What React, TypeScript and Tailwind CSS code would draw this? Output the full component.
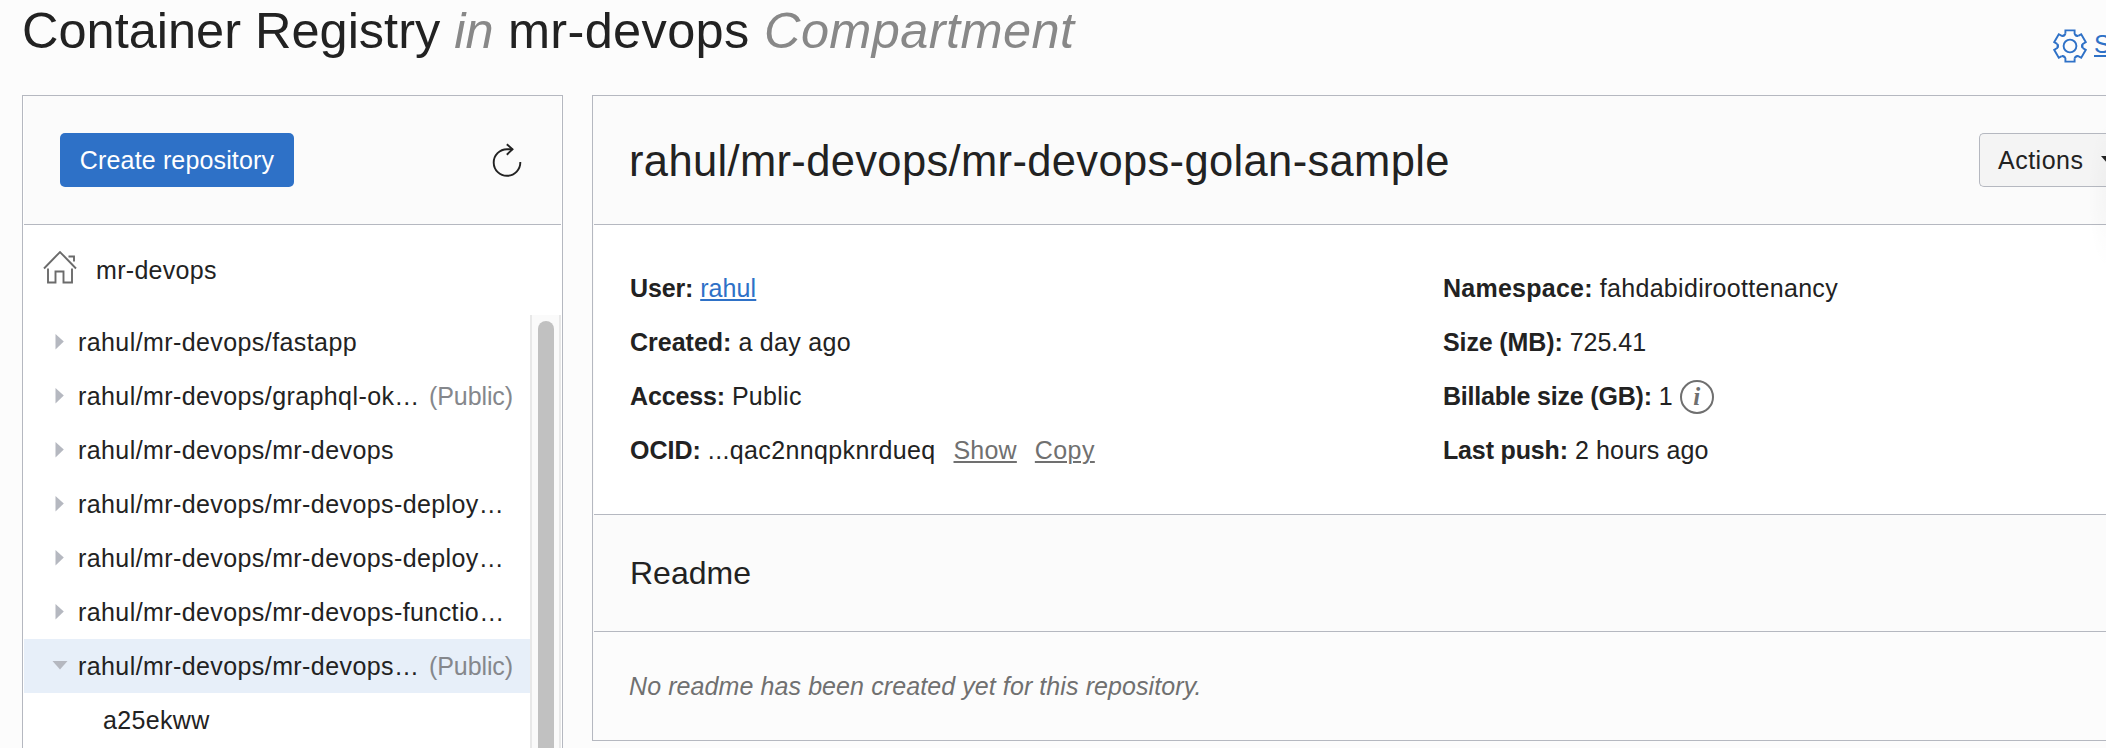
import React from "react";

type Repo = { name: string; isPublic?: boolean; open?: boolean };

const repos: Repo[] = [
  { name: "rahul/mr-devops/fastapp" },
  { name: "rahul/mr-devops/graphql-ok…", isPublic: true },
  { name: "rahul/mr-devops/mr-devops" },
  { name: "rahul/mr-devops/mr-devops-deploy…" },
  { name: "rahul/mr-devops/mr-devops-deploy…" },
  { name: "rahul/mr-devops/mr-devops-functio…" },
  { name: "rahul/mr-devops/mr-devops…", isPublic: true, open: true },
];

const TOOTH = "M-4.600 -12.200V-15.600H4.600V-12.200Q5.400 -9.900 7.800 -10.300";

function Gear() {
  return (
    <svg width="34" height="34" viewBox="-17 -17 34 34" fill="none" stroke="#2e71c7" strokeWidth="1.9">
      {[0, 60, 120, 180, 240, 300].map((a) => (
        <g key={a} transform={`rotate(${a})`}>
          <path d={TOOTH} />
          <path d="M-4.600 -12.200Q-5.400 -9.900 -7.800 -10.300" />
        </g>
      ))}
      <circle r="6.400" />
    </svg>
  );
}

function Home() {
  return (
    <svg width="34" height="34" viewBox="0 0 34 34" fill="none" stroke="#6b6b6b" strokeWidth="1.9">
      <path d="M1 18.500 17 2l16 16.500" />
      <path d="M25.500 6.500h5.500v5" />
      <path d="M5 18.500V32.500h7.500V21.500h8V32.500H29V18.500" />
    </svg>
  );
}

function Refresh() {
  return (
    <svg width="30" height="34" viewBox="0 0 30 34" fill="none" stroke="#222" strokeWidth="1.900">
      <path d="M28.300 19A13.300 13.300 0 1 1 15 6.200H20.500" />
      <path d="M14.800 1.200 20.500 6.200 14.800 11.700" />
    </svg>
  );
}

type FieldProps = { label: string; tight?: string; children: React.ReactNode };

function Field({ label, tight = "", children }: FieldProps) {
  return (
    <div className="flex h-[54px] items-center whitespace-pre tracking-[0.3px]">
      <b className={`mr-[7px] ${tight || "tracking-normal"}`}>{label}:</b>
      {children}
    </div>
  );
}

export default function App() {
  return (
    <div className="relative flex h-[748px] w-[2106px] flex-col overflow-hidden bg-[#fcfcfc] font-['Liberation_Sans',Arial,sans-serif] text-[25px] text-[#222]">
      <header className="flex h-[95px] shrink-0 justify-between whitespace-nowrap pl-[22px]">
        <h1 className="text-[50.500px] leading-[62px]">
          <span>Container Registry </span>
          <i className="text-[#888]">in</i>
          <span className="tracking-[0.35px]"> mr-devops </span>
          <i className="tracking-[0.4px] text-[#888]">Compartment</i>
        </h1>
        <div className="mt-[29px] flex h-[34px] w-[53px] gap-[7px] text-[#2e71c7]">
          <span className="shrink-0"><Gear /></span>
          <span className="leading-[31px] underline decoration-2 underline-offset-2">Settings</span>
        </div>
      </header>
      <main className="flex min-h-0 flex-1 gap-[29px] pl-[22px]">
        <aside className="flex w-[541px] shrink-0 flex-col border border-b-0 border-[#b5b8c0] bg-white px-px">
          <div className="flex h-[129px] shrink-0 items-center justify-between border-b border-[#b5b8c0] bg-[#fbfbfb] pl-[36px] pr-[39px]">
            <button className="h-[54px] w-[234px] rounded-[5px] bg-[#2e71c7] pt-[2px] tracking-[0.15px] text-white">Create repository</button>
            <Refresh />
          </div>
          <div className="flex h-[90px] shrink-0 items-center pl-[19px] pt-[2px]">
            <span className="pb-[9px]"><Home /></span>
            <span className="ml-[19px] tracking-[0.3px]">mr-devops</span>
          </div>
          <div className="flex min-h-0 flex-1">
            <ul className="min-w-0 flex-1">
              {repos.map((r, i) => (
                <li key={i} className={`flex h-[54px] items-center whitespace-nowrap ${r.open ? "bg-[#e7eff9]" : ""}`}>
                  <svg width="54" height="16" viewBox="0 0 54 16" className="shrink-0" fill="#b5b8c0">
                    {r.open ? <path d="M28.500 3h15l-7.500 8.500z" /> : <path d="M31.500 0 39.800 7.500 31.500 15.500z" />}
                  </svg>
                  <span className="pt-[2px] tracking-[0.41px]">{r.name}</span>
                  {r.isPublic && <span className="ml-auto mr-[17px] pt-[2px] tracking-[-0.1px] text-[#85878c]">(Public)</span>}
                </li>
              ))}
              <li className="flex h-[54px] items-center pl-[79px] pt-[2px] tracking-[0.35px]">a25ekww</li>
            </ul>
            <div className="flex w-[31px] justify-center border-x-2 border-[#e8e8e8] bg-[#fafafa] pt-[6px]">
              <div className="w-[16px] rounded-t-full bg-[#c1c1c1]" />
            </div>
          </div>
        </aside>
        <section className="flex h-[646px] flex-1 flex-col border border-r-0 border-[#b5b8c0] bg-[#fbfbfb] pl-px">
          <div className="flex h-[129px] shrink-0 items-center justify-between border-b border-[#b5b8c0] pl-[35px]">
            <h2 className="pt-[4px] text-[43.500px] tracking-[0.35px]">rahul/mr-devops/mr-devops-golan-sample</h2>
            <button className="flex h-[54px] w-[127px] items-center overflow-hidden rounded-l-[5px] border border-r-0 border-[#b5b8c0] bg-[#f4f4f4] pl-[18px]">
              <span className="pt-[2px] tracking-[0.5px]">Actions</span>
              <svg width="14" height="8" viewBox="0 0 14 8" className="ml-[18px] shrink-0" fill="#222"><path d="M0 0h14L7 8z" /></svg>
            </button>
          </div>
          <div className="grid h-[290px] shrink-0 grid-cols-[813px_1fr] border-b border-[#b5b8c0] bg-white pl-[36px] pt-[37px]">
            <div>
              <Field label="User" tight="tracking-[-0.15px]"><a className="tracking-[0.1px] text-[#2e71c7] underline decoration-2 underline-offset-2">rahul</a></Field>
              <Field label="Created">a day ago</Field>
              <Field label="Access" tight="tracking-[-0.15px]">Public</Field>
              <Field label="OCID">
                <span className="tracking-[0.37px]">...qac2nnqpknrdueq</span>
                <a className="ml-[18px] tracking-[0.2px] text-[#707070] underline decoration-2 underline-offset-2">Show</a>
                <a className="ml-[18px] tracking-[0.4px] text-[#707070] underline decoration-2 underline-offset-2">Copy</a>
              </Field>
            </div>
            <div>
              <Field label="Namespace" tight="tracking-[0.25px]">fahdabidiroottenancy</Field>
              <Field label="Size (MB)" tight="tracking-[-0.12px]"><span className="tracking-normal">725.41</span></Field>
              <Field label="Billable size (GB)" tight="tracking-[-0.2px]">
                1
                <span className="ml-[7px] flex size-[34px] items-center justify-center rounded-full border-2 border-[#6f6f6f] font-['Liberation_Serif',serif] text-[25px] font-bold italic text-[#6f6f6f]">i</span>
              </Field>
              <Field label="Last push" tight="tracking-[-0.15px]"><span className="tracking-[0.15px]">2 hours ago</span></Field>
            </div>
          </div>
          <h3 className="flex h-[117px] shrink-0 items-center border-b border-[#b5b8c0] pl-[36px] text-[32px]">Readme</h3>
          <p className="flex flex-1 items-center bg-[#fcfcfc] pl-[35px] pt-[2px] italic tracking-[0.09px] text-[#707070]">No readme has been created yet for this repository.</p>
        </section>
      </main>
      <div className="pointer-events-none absolute right-0 top-[120px] h-[150px] w-[18px] bg-[radial-gradient(ellipse_at_right,rgba(0,0,0,0.025),transparent_70%)]" />
    </div>
  );
}
